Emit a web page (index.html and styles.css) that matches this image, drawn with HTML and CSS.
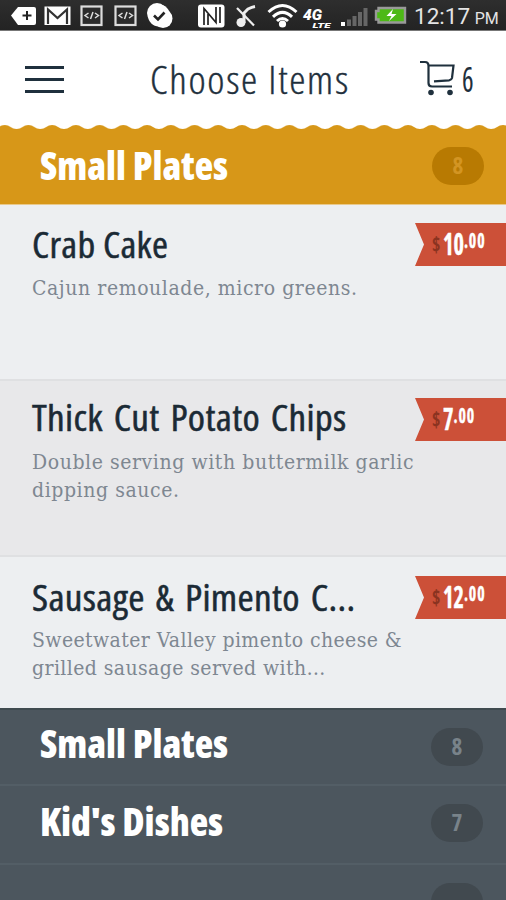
FILE: index.html
```
<!DOCTYPE html>
<html lang="en">
<head>
  <meta charset="UTF-8">
  <title>Choose Items</title>
  <link rel="stylesheet" href="styles.css">
</head>
<body>
  <!-- Status bar -->
  <div class="status-bar">
    <svg class="status-icons" width="408" height="30" viewBox="0 0 408 30">
      <!-- more -->
      <path d="M11 15.500l7-8.500h16q2 0 2 2v14q0 2-2 2H18z" fill="#fff"/>
      <path d="M22.500 15.500h9M27 11v9" stroke="#222" stroke-width="2"/>
      <!-- mail -->
      <rect x="44.500" y="6.500" width="26" height="18.500" fill="#fff"/>
      <path d="M48 24V9.500l9.500 8.500L67 9.500V24" fill="none" stroke="#333" stroke-width="2.200"/>
      <!-- dev apps -->
      <g fill="#2b2b2b" stroke="#ddd" stroke-width="2.200">
        <rect x="81.500" y="6.500" width="20" height="18.500"/>
        <rect x="115.500" y="6.500" width="20" height="18.500"/>
      </g>
      <path id="code" d="M88.500 13l-3.500 2.500 3.500 2.500M95 13l3.500 2.500L95 18M93 12l-2.500 7" fill="none" stroke="#ddd" stroke-width="1.500"/>
      <use href="#code" x="34"/>
      <!-- check -->
      <circle cx="157" cy="13" r="10" fill="#fff"/>
      <circle cx="163" cy="18.500" r="9.500" fill="#fff"/>
      <circle cx="159" cy="15.500" r="11" fill="#fff"/>
      <path d="M154 15.500l4 4 6.500-7" fill="none" stroke="#222" stroke-width="2.600"/>
      <!-- nfc -->
      <rect x="198" y="4.500" width="26.500" height="23" rx="3" fill="#fff"/>
      <path d="M204 25V8.500l12 14V7M208 25V14M220 23V7" fill="none" stroke="#222" stroke-width="1.700"/>
      <!-- muted -->
      <circle cx="241" cy="22.500" r="4.500" fill="#eee"/>
      <path d="M244 23V13l4-4q4-2 7-2.500" fill="none" stroke="#eee" stroke-width="3"/>
      <path d="M237 8l17 17.500" stroke="#eee" stroke-width="2.200"/>
      <!-- wifi -->
      <g fill="none" stroke="#fff" stroke-width="3">
        <path d="M268.500 12q14-13 28 0"/>
        <path d="M273 16.800q9.500-9 19 0"/>
        <path d="M277 21q5.500-5 11 0"/>
      </g>
      <circle cx="282.500" cy="24" r="3.600" fill="#fff"/>
      <text class="net" x="303" y="20" textLength="19" lengthAdjust="spacingAndGlyphs">4G</text>
      <text class="lte" x="312.500" y="28" textLength="18" lengthAdjust="spacingAndGlyphs">LTE</text>
      <!-- signal -->
      <rect x="341" y="22" width="4" height="4" fill="#fff"/>
      <g fill="#666">
        <rect x="347" y="19.500" width="4" height="6.500"/>
        <rect x="352.500" y="16" width="4" height="10"/>
        <rect x="358" y="12" width="4" height="14"/>
        <rect x="363.500" y="8" width="4" height="18"/>
      </g>
      <!-- battery -->
      <path d="M378.500 8h26.500v14.500h-26.500v-3h-2.500v-8.500h2.500z" fill="#4db916" stroke="#999" stroke-width="2.400"/>
      <path d="M393 9l-6.500 7h5l-2.500 5 7.500-7h-5z" fill="#fff"/>
    </svg>
    <div class="clock">12:17 <span class="ampm">PM</span></div>
  </div>

  <!-- Header -->
  <header class="header">
    <div class="menu-btn"><span></span><span></span><span></span></div>
    <h1 class="page-title">Choose Items</h1>
    <div class="cart">
      <svg width="36" height="36" viewBox="0 0 36 36" fill="none" stroke="#1f303d" stroke-width="2.200">
        <path d="M0 2h5q3.500 0 3.500 4v17q0 3.500 3.500 3.500h20"/>
        <path d="M9 5.500h24.500l-1.500 12.500q-.5 2-3 2.300L14 21.300"/>
        <circle cx="11" cy="32.500" r="2.800" fill="#1f303d" stroke="none"/>
        <circle cx="30" cy="32.500" r="2.800" fill="#1f303d" stroke="none"/>
      </svg>
      <span class="cart-count">6</span>
    </div>
  </header>

  <!-- Open category -->
  <svg class="wave" width="506" height="5">
    <defs>
      <pattern id="scallop" x="-7.200" width="23.730" height="5" patternUnits="userSpaceOnUse">
        <path d="M0 5V4Q3.500 4 6 2T11.900 0T17.800 2T23.730 4V5z" fill="#d79718"/>
      </pattern>
    </defs>
    <rect width="506" height="5" fill="url(#scallop)"/>
  </svg>
  <div class="category active">
    <h2>Small Plates</h2>
    <span class="badge">8</span>
  </div>

  <div class="item crab">
    <div class="info">
      <h3>Crab Cake</h3>
      <p>Cajun remoulade, micro greens.</p>
    </div>
    <div class="price"><span class="sign">$</span><span class="amount">10<sup>.00</sup></span></div>
  </div>
  <div class="item chips">
    <div class="info">
      <h3>Thick Cut Potato Chips</h3>
      <p>Double serving with buttermilk garlic dipping sauce.</p>
    </div>
    <div class="price"><span class="sign">$</span><span class="amount">7<sup>.00</sup></span></div>
  </div>
  <div class="item sausage">
    <div class="info">
      <h3>Sausage &amp; Pimento C...</h3>
      <p>Sweetwater Valley pimento cheese &amp; grilled sausage served with…</p>
    </div>
    <div class="price"><span class="sign">$</span><span class="amount">12<sup>.00</sup></span></div>
  </div>

  <!-- Closed categories -->
  <div class="category first">
    <h2>Small Plates</h2>
    <span class="badge">8</span>
  </div>
  <div class="category">
    <h2>Kid's Dishes</h2>
    <span class="badge">7</span>
  </div>
  <div class="category">
    <h2></h2>
    <span class="badge"></span>
  </div>
</body>
</html>
```
FILE: styles.css
```
* {
  box-sizing: border-box;
}

body {
  margin: 0;
  height: 900px;
  overflow: hidden;
  background: #fff;
  font-family: "Open Sans", sans-serif;
  font-stretch: 75%;
}

h1, h2, h3, p {
  margin: 0;
}

/* Status bar */
.status-bar {
  display: flex;
  height: 31px;
  background: linear-gradient(#2e2e2e, #232323);
  border-bottom: 1px solid #777;
}

.net, .lte {
  font-family: Roboto, sans-serif;
  font-weight: 900;
  font-style: italic;
  font-stretch: 100%;
  fill: #fff;
}

.net {
  font-size: 15px;
}

.lte {
  font-size: 8px;
}

.clock {
  padding-left: 6px;
  font-family: Roboto, sans-serif;
  font-stretch: 100%;
  font-size: 22.5px;
  line-height: 33px;
  color: #e4e4e4;
  white-space: nowrap;
}

.ampm {
  margin-left: -1px;
  font-size: 16px;
}

/* Header */
.header {
  display: flex;
  align-items: center;
  height: 94px;
  padding-left: 25px;
  color: #1f303d;
}

.menu-btn {
  display: flex;
  flex-direction: column;
  gap: 9px;
  width: 39px;
  padding-top: 2px;
}

.menu-btn span {
  height: 3px;
  background: #1f303d;
}

.page-title {
  width: 270px;
  margin-left: 86px;
  padding-top: 1px;
  font-size: 38.5px;
  font-weight: 300;
  line-height: 44px;
  letter-spacing: 1.6px;
  transform: scaleX(1.065);
  transform-origin: left;
  -webkit-text-stroke: 0.4px #1f303d;
}

.cart {
  display: flex;
  gap: 6px;
}

.cart-count {
  font-size: 35px;
  line-height: 37px;
  transform: scaleX(0.78);
  transform-origin: left;
}

/* Categories */
.wave {
  display: block;
}

.category {
  display: flex;
  align-items: center;
  justify-content: space-between;
  height: 79px;
  padding: 0 23px 3px 40px;
  background: #4c565e;
  border-bottom: 2px solid #535e66;
  color: #fff;
}

.category h2 {
  padding-bottom: 4px;
  font-size: 38px;
  font-weight: 800;
  line-height: 44px;
}

.category.active {
  height: 75px;
  padding-right: 22px;
  background: #d79718;
  border-bottom: 1px solid #e9c98b;
}

.category.active h2 {
  padding-bottom: 2px;
}

.category.first {
  height: 78px;
  padding-bottom: 0;
  border-top: 2px solid #404b50;
}

.category.first h2 {
  padding-bottom: 8px;
}

.badge {
  width: 52px;
  height: 38px;
  border-radius: 19px;
  background: #41494f;
  color: #79838a;
  font-size: 23px;
  font-weight: 700;
  line-height: 37px;
  text-align: center;
}

.active .badge {
  background: #b87a02;
  color: #d39523;
}

/* Items */
.item {
  display: flex;
  justify-content: space-between;
  align-items: flex-start;
  height: 176px;
  padding-left: 32px;
  background: #edeff1;
  border-bottom: 2px solid #dfe0e2;
}

.info {
  width: 383px;
  white-space: nowrap;
}

.item h3 {
  font-size: 37px;
  font-weight: 500;
  line-height: 44px;
  letter-spacing: 0.3px;
  word-spacing: 3px;
  color: #1b2a35;
  transform: scaleX(1.06);
  transform-origin: left;
  -webkit-text-stroke: 0.5px #1b2a35;
}

.item p {
  width: 386px;
  margin-top: 9px;
  font-family: "DejaVu Serif", serif;
  font-stretch: condensed;
  font-size: 21px;
  line-height: 28px;
  letter-spacing: 0.57px;
  color: #7e8791;
  white-space: normal;
}

.crab {
  padding-top: 17px;
}

.crab h3 {
  word-spacing: 0;
  transform: scaleX(1.045);
}

.crab p {
  margin-top: 8px;
}

.chips {
  padding-top: 14px;
  background: #e8e8ea;
}

.sausage {
  height: 151px;
  padding-top: 18px;
  border-bottom: none;
}

.sausage p {
  margin-top: 7px;
  letter-spacing: 0.4px;
}

/* Price ribbon */
.price {
  display: flex;
  width: 91px;
  height: 43px;
  margin-top: 1px;
  padding-left: 17px;
  background: #cc5038;
  clip-path: polygon(0 0, 100% 0, 100% 100%, 0 100%, 9px 50%);
  color: #fff;
  font-weight: 700;
  line-height: 41px;
}

.chips .price {
  margin-top: 3px;
}

.sign {
  width: 11px;
  font-size: 21px;
  line-height: 43px;
  color: #8a3320;
  transform: scaleX(0.85);
  transform-origin: left;
}

.amount {
  font-size: 31px;
  transform: scaleX(0.72);
  transform-origin: left;
  -webkit-text-stroke: 0.4px #fff;
}

.amount sup {
  font-size: 22px;
  line-height: 0;
  letter-spacing: 1.2px;
  vertical-align: 7px;
}
```
